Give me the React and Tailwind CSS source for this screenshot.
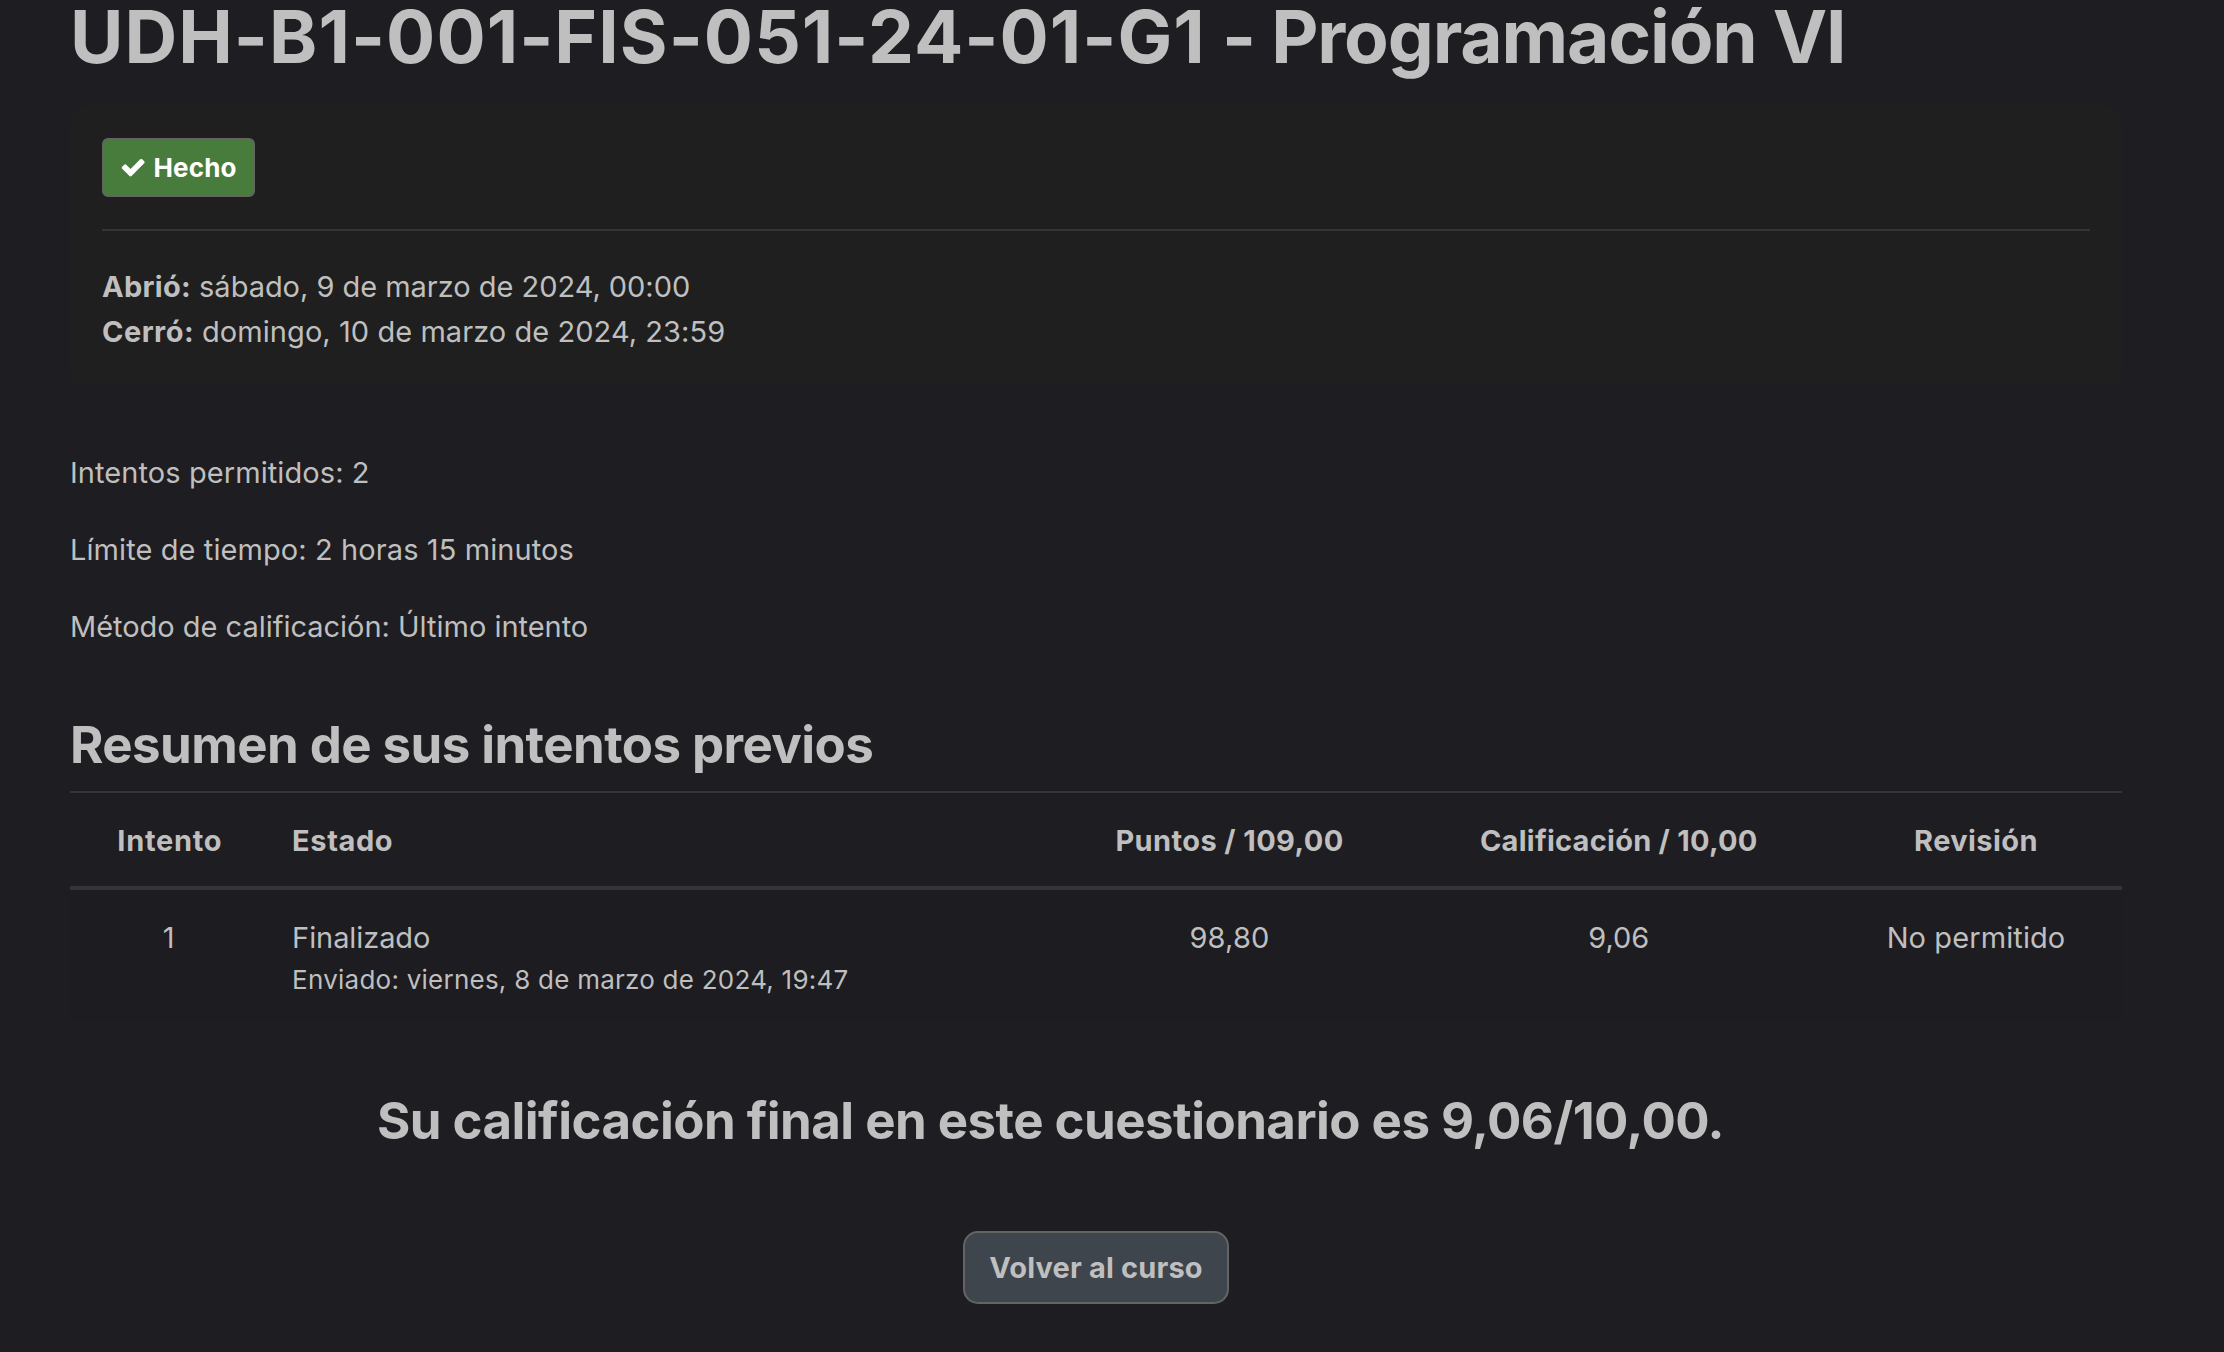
function Badge() {
  return (
    <div className="flex h-[59px] w-[153px] items-center rounded-[6px] border-2 border-[#646464] bg-[#487c3c] pl-4 text-[26px] leading-[39px] font-bold text-white">
      <svg viewBox="0 0 1792 1792" className="mr-[7px] size-[26.4px] shrink-0" fill="currentColor" aria-hidden="true">
        <path d="M1671 566q0 40-28 68l-724 724-136 136q-28 28-68 28t-68-28l-136-136-362-362q-28-28-28-68t28-68l136-136q28-28 68-28t68 28l294 295 656-657q28-28 68-28t68 28l136 136q28 28 28 68z" />
      </svg>
      <span className="tracking-[0.2px]">Hecho</span>
    </div>
  );
}

const columns = "grid grid-cols-[199.5px_782px_356px_422.5px_292px]";

export default function App() {
  return (
    <main className="h-[1352px] bg-[#1e1d21] pr-[102px] pl-[70px] font-['Inter',sans-serif] text-[29px] leading-[45px] whitespace-nowrap text-[#bfbfbf]">
      <h1 className="text-[73px] leading-[74px] font-bold tracking-[-1.15px]">
        <span className="tracking-[1.05px]">UDH-B1-001-FIS-051-24-01-G1</span> - Programación VI
      </h1>

      <section className="mt-8 h-[279px] rounded-[15px] bg-[#1f1f1f] px-8 pt-8">
        <Badge />
        <hr className="mt-8 mb-[33px] border-t-2 border-[#353535]" />
        <div className="flex gap-2">
          <strong className="tracking-[0.3px]">Abrió:</strong>
          <span className="tracking-[-0.03px]">sábado, 9 de marzo de 2024, 00:00</span>
        </div>
        <div className="flex gap-2">
          <strong className="tracking-[0.45px]">Cerró:</strong>
          <span className="tracking-[0.06px]">domingo, 10 de marzo de 2024, 23:59</span>
        </div>
      </section>

      <div className="mt-[65px] flex flex-col gap-8">
        <p className="tracking-[0.08px]">Intentos permitidos: 2</p>
        <p className="tracking-[0.09px]">Límite de tiempo: 2 horas 15 minutos</p>
        <p className="tracking-[-0.02px]">Método de calificación: Último intento</p>
      </div>

      <h2 className="mt-[65px] text-[51px] leading-[61px] font-bold tracking-[-0.58px]">
        Resumen de sus intentos previos
      </h2>

      <div className="mt-4 border-t-2 border-[#353535] text-center">
        <div className={`${columns} border-b-4 border-[#353535] pt-[25px] pb-[23px] font-bold`}>
          <div className="tracking-[0.7px]">Intento</div>
          <div className="pl-[22.6px] text-left tracking-[0.6px]">Estado</div>
          <div className="tracking-[0.4px]">Puntos / 109,00</div>
          <div className="tracking-[0.25px]">Calificación / 10,00</div>
          <div className="tracking-[0.4px]">Revisión</div>
        </div>
        <div className={`${columns} bg-[#1d1c20] pt-[25px] pb-[22px]`}>
          <div className="pr-[2px]">1</div>
          <div className="pl-[22.6px] text-left">
            <div className="tracking-[-0.08px]">Finalizado</div>
            <div className="text-[26px] leading-[39px] tracking-[0.24px]">
              Enviado: viernes, 8 de marzo de 2024, 19:47
            </div>
          </div>
          <div className="tracking-[0.2px]">98,80</div>
          <div>9,06</div>
          <div className="tracking-[0.1px]">No permitido</div>
        </div>
      </div>

      <h2 className="mt-[69px] pr-[91px] text-center text-[51px] leading-[61px] font-bold tracking-[-0.55px]">
        Su calificación final en este cuestionario es 9,06/10,00.
      </h2>

      <div className="mt-20 flex justify-center">
        <button className="h-[73px] w-[266px] rounded-[15px] border-2 border-[#646464] bg-[#3e454d] font-bold tracking-[0.15px]">
          Volver al curso
        </button>
      </div>
    </main>
  );
}
